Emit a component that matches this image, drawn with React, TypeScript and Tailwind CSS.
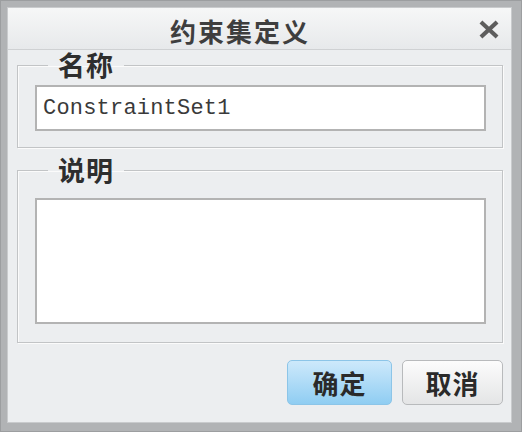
import React from 'react';

const CJK = "font-['Noto_Sans_CJK_SC','Noto_Sans',sans-serif]";

function GroupBox({ label, children, className }: { label: string; children: React.ReactNode; className?: string }) {
  return (
    <fieldset className={`border border-[#c2c4c6] shadow-[inset_1px_1px_0_#fbfbfb,1px_1px_0_#fbfbfb] ${className ?? ''}`}>
      <legend className={`ml-[30px] px-[10px] h-[28px] leading-[28px] text-[27px] font-bold tracking-[1px] text-[#2e2e2e] ${CJK}`}>
        {label}
      </legend>
      {children}
    </fieldset>
  );
}

export default function App() {
  return (
    <div className="w-[522px] h-[432px] bg-[#b1b3b5] border border-[#9c9ea0] pl-[6px] pr-[9px] pt-[6px] pb-[8px]">
      <div className="h-full flex flex-col border border-[#c9cbcd] bg-[#eceef0]">
        {/* title bar */}
        <div className="h-[42px] flex items-center border-b border-[#cfd1d3] bg-gradient-to-b from-[#f6f7f7] to-[#e7e9eb]">
          <div className={`flex-1 text-center pt-[3px] pl-[3px] text-[26px] font-bold tracking-[2px] text-[#3e3e3e] ${CJK}`}>
            约束集定义
          </div>
          <div className="w-[42px] flex justify-start pl-[10px] pt-[2px]">
            <svg width="20" height="19" viewBox="0 0 20 19">
              <path d="M3.5 3.5 L16.5 15.5 M16.5 3.5 L3.5 15.5" stroke="#5d5d5d" strokeWidth="4.2" strokeLinecap="square" />
            </svg>
          </div>
        </div>

        {/* body */}
        <div className="flex-1 flex flex-col pl-[9px] pr-[8px]">
          <GroupBox label="名称" className="mt-[1px]">
            <div className="mt-[6px] mb-[16px] ml-[17px] mr-[16px] h-[46px] bg-white border-2 border-[#b3b3b3] flex items-center pl-[6px]">
              <span className="font-['Liberation_Mono','DejaVu_Sans_Mono',monospace] text-[22px] text-[#3a3a3a] tracking-[0.2px]">
                ConstraintSet1
              </span>
            </div>
          </GroupBox>

          <GroupBox label="说明" className="mt-[8px]">
            <div className="mt-[14px] mb-[18px] ml-[17px] mr-[16px] h-[126px] bg-white border-2 border-[#b3b3b3]" />
          </GroupBox>

          <div className="mt-[17px] flex justify-end gap-[10px]">
            <button
              className={`w-[105px] h-[45px] rounded-[5px] border border-[#8cc5e8] bg-gradient-to-b from-[#cde9fb] to-[#8fcdf2] text-[26px] font-bold tracking-[1px] text-[#2a2a2a] ${CJK}`}
            >
              确定
            </button>
            <button
              className={`w-[101px] h-[45px] rounded-[5px] border border-[#b8babc] bg-gradient-to-b from-[#fcfcfc] to-[#e4e5e6] text-[26px] font-bold tracking-[1px] text-[#2a2a2a] ${CJK}`}
            >
              取消
            </button>
          </div>
        </div>
      </div>
    </div>
  );
}
